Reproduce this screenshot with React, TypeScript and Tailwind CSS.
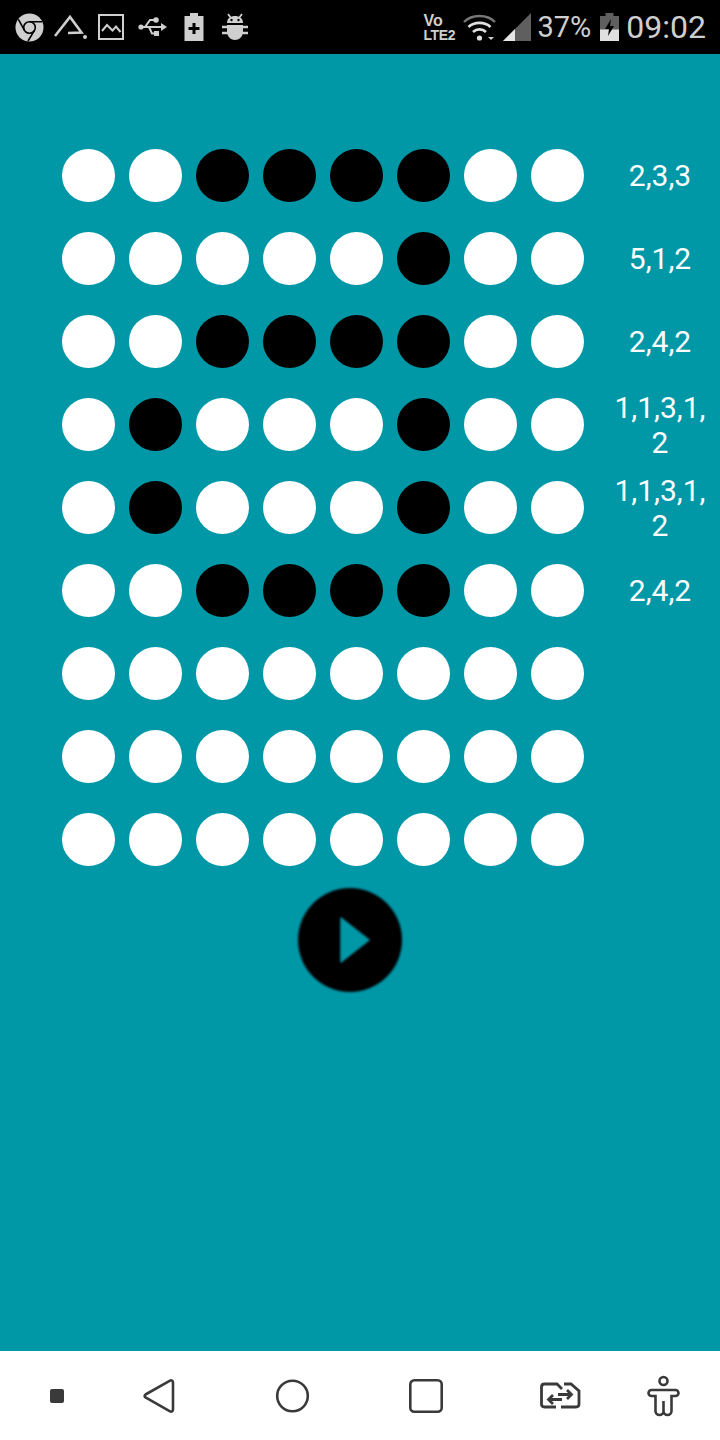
import React from 'react';

const rows = [
  { dots: '00111100', label: '2,3,3' },
  { dots: '00000100', label: '5,1,2' },
  { dots: '00111100', label: '2,4,2' },
  { dots: '01000100', label: '1,1,3,1,2' },
  { dots: '01000100', label: '1,1,3,1,2' },
  { dots: '00111100', label: '2,4,2' },
  { dots: '00000000', label: '' },
  { dots: '00000000', label: '' },
  { dots: '00000000', label: '' },
];

const StatusBar = () => (
  <div className="h-[54px] shrink-0 bg-black flex items-center text-[#cfcfcf] font-['Roboto',sans-serif]">
    {/* Chrome */}
    <svg className="ml-[15px]" width="29" height="29" viewBox="0 0 29 29">
      <circle cx="14.5" cy="14.5" r="14" fill="#cfcfcf" />
      <circle cx="14.5" cy="14.5" r="5.8" fill="none" stroke="#000" strokeWidth="1.6" />
      <path d="M14.5 8.7H27M9.5 17.4 3.4 6.4M19.5 17.4 13 28" fill="none" stroke="#000" strokeWidth="1.6" />
    </svg>
    {/* Triangle app */}
    <svg className="ml-[10px]" width="33" height="29" viewBox="0 0 33 29">
      <path d="M1 23 16 4 27.5 19.5 14 20" fill="none" stroke="#cfcfcf" strokeWidth="2.6" />
      <circle cx="31" cy="24" r="2" fill="#cfcfcf" />
    </svg>
    {/* Picture */}
    <svg className="ml-[11px]" width="26" height="26" viewBox="0 0 26 26">
      <rect x="1" y="1" width="24" height="24" fill="none" stroke="#cfcfcf" strokeWidth="2" />
      <path d="M4 17 9 11 14.5 16.5 18 12.5 22.5 18" fill="none" stroke="#cfcfcf" strokeWidth="2" />
    </svg>
    {/* USB */}
    <svg className="ml-[14px]" width="29" height="22" viewBox="0 0 29 22">
      <path d="M1 11H27M7 11 12 4H16M11 11 14 17.5H17" fill="none" stroke="#cfcfcf" strokeWidth="2" />
      <circle cx="3" cy="11" r="2.6" fill="#cfcfcf" />
      <circle cx="18" cy="4" r="2.8" fill="#cfcfcf" />
      <rect x="16" y="15" width="5" height="5" fill="#cfcfcf" />
      <path d="M23 7 29 11 23 15Z" fill="#cfcfcf" />
    </svg>
    {/* Battery plus */}
    <svg className="ml-[17px]" width="20" height="28" viewBox="0 0 20 28">
      <path d="M6 0H14V3H19.5V28H.5V3H6Z" fill="#cfcfcf" />
      <path d="M8.5 10H11.5V14H15.5V17H11.5V21H8.5V17H4.5V14H8.5Z" fill="#000" />
    </svg>
    {/* Android bug */}
    <svg className="ml-[18px]" width="26" height="28" viewBox="0 0 26 28">
      <path d="M6 1 9 5M20 1 17 5" stroke="#cfcfcf" strokeWidth="1.8" />
      <path d="M5 10C5 5 9 3 13 3S21 5 21 10Z" fill="#cfcfcf" />
      <circle cx="9.5" cy="7" r="1.2" fill="#000" />
      <circle cx="16.5" cy="7" r="1.2" fill="#000" />
      <path d="M5 12H21V18C21 24 17 27 13 27S5 24 5 18Z" fill="#cfcfcf" />
      <path d="M0 14H26M0 20H26" stroke="#cfcfcf" strokeWidth="2.4" />
    </svg>

    {/* VoLTE */}
    <div className="ml-auto w-[33px] mt-[2px] flex flex-col font-['Liberation_Sans',sans-serif] font-bold">
      <span className="text-[16px] leading-[15px]">Vo</span>
      <span className="text-[14px] leading-[15px] tracking-[-0.4px]">LTE2</span>
    </div>
    {/* Wifi */}
    <svg className="ml-[7px]" width="33" height="28" viewBox="0 0 33 28">
      <path d="M1 9C9 1 24 1 32 9" fill="none" stroke="#777" strokeWidth="2.4" />
      <path d="M5.5 14C11 8.5 22 8.5 27.5 14M10 19C13.5 15.5 19.5 15.5 23 19" fill="none" stroke="#e0e0e0" strokeWidth="2.6" />
      <circle cx="16.5" cy="25" r="2.6" fill="#e0e0e0" />
      <path d="M25 24H31L28 27Z" fill="#cfcfcf" />
    </svg>
    {/* Signal */}
    <svg className="ml-[7px]" width="28" height="28" viewBox="0 0 28 28">
      <path d="M0 28 28 0V28Z" fill="#5f5f5f" />
      <path d="M0 28 12 16V28Z" fill="#e6e6e6" />
    </svg>
    <span className="ml-[6px] text-[29px] leading-none">37%</span>
    {/* Charging battery */}
    <svg className="ml-[9px]" width="19" height="28" viewBox="0 0 19 28">
      <path d="M5.5 0H13.5V3H19V28H0V3H5.5Z" fill="#5f5f5f" />
      <path d="M0 16.5H19V28H0Z" fill="#e0e0e0" />
      <path d="M11 6 5 16H9L8 23 14 13H10Z" fill="#000" />
    </svg>
    <span className="ml-[7px] mr-[14px] text-[32px] leading-none">09:02</span>
  </div>
);

const Board = () => (
  <div className="flex-1 bg-[#0097a7] pt-[80px] font-['Roboto',sans-serif] text-white">
    {rows.map((row, i) => (
      <div key={i} className="h-[83px] flex items-center pl-[55px]">
        {row.dots.split('').map((d, j) => (
          <div key={j} className="w-[67px] flex justify-center">
            <div className={`w-[53px] h-[53px] rounded-full blur-[0.7px] ${d === '1' ? 'bg-black' : 'bg-white'}`} />
          </div>
        ))}
        <div className="w-[100px] ml-[19px] text-center text-[30px] leading-[35px] break-all">{row.label}</div>
      </div>
    ))}
    <div className="ml-[298px] mt-[7px] w-[104px] h-[104px] rounded-full bg-black blur-[1px] flex items-center justify-center">
      <svg width="30" height="46" viewBox="0 0 30 46" className="ml-[10px]">
        <path d="M1 1 29 23 1 45Z" fill="#0097a7" stroke="#0097a7" strokeWidth="1.5" strokeLinejoin="round" />
      </svg>
    </div>
  </div>
);

const NavBar = () => (
  <div className="h-[89px] shrink-0 bg-white flex items-center pl-[33px] text-[#3a3a3a]">
    <div className="w-[48px] flex justify-center">
      <div className="w-[14px] h-[14px] rounded-[2px] bg-[#3a3a3a]" />
    </div>
    <svg className="ml-[54px]" width="48" height="36" viewBox="0 0 48 36">
      <path d="M10.5 16.5 35 2.6C36.5 1.9 38 2.6 38 4.5V31.5C38 33.4 36.5 34.1 35 33.4L10.5 19.5C9.3 18.7 9.3 17.3 10.5 16.5Z" fill="none" stroke="currentColor" strokeWidth="2.6" />
    </svg>
    <svg className="ml-[85px]" width="48" height="36" viewBox="0 0 48 36">
      <circle cx="24.5" cy="18" r="15.3" fill="none" stroke="currentColor" strokeWidth="2.6" />
    </svg>
    <svg className="ml-[86px]" width="48" height="36" viewBox="0 0 48 36">
      <rect x="8.3" y="2.3" width="31.4" height="31.4" rx="4" fill="none" stroke="currentColor" strokeWidth="2.6" />
    </svg>
    <svg className="ml-[86px]" width="48" height="36" viewBox="0 0 48 36">
      <path d="M20 29H8.5C6.5 29 5.5 28 5.5 26V9C5.5 7 6.5 6 8.5 6H21L26 11M28 6H35L43 13V26C43 28 42 29 40 29H25" fill="none" stroke="currentColor" strokeWidth="2.8" />
      <path d="M22 16.5H35M31 12 35.5 16.5 31 21M26 21.5H13M17 17 12.5 21.5 17 26" fill="none" stroke="currentColor" strokeWidth="2.8" />
    </svg>
    <svg className="ml-[55px] mt-[1px]" width="48" height="44" viewBox="0 0 48 44">
      <circle cx="24.5" cy="7" r="4" fill="none" stroke="currentColor" strokeWidth="2.6" />
      <path d="M20 16H36.5a3 3 0 0 1 0 6H32.5V37a4 4 0 0 1-8 0V27M24.5 37a4 4 0 0 1-8 0V22H12.5a3 3 0 0 1 0-6H20" fill="none" stroke="currentColor" strokeWidth="2.6" />
    </svg>
  </div>
);

export default function App() {
  return (
    <div className="w-[720px] h-[1440px] flex flex-col overflow-hidden">
      <StatusBar />
      <Board />
      <NavBar />
    </div>
  );
}
